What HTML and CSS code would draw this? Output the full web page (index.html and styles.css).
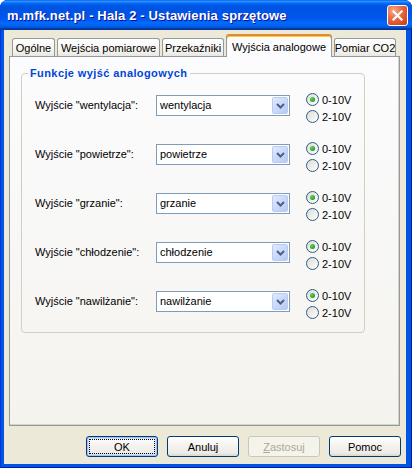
FILE: index.html
```html
<!DOCTYPE html>
<html lang="pl">
<head>
<meta charset="utf-8">
<title>Ustawienia sprzętowe</title>
<link rel="stylesheet" href="styles.css">
</head>
<body>
<div class="window">
  <div class="titlebar">
    <span class="title">m.mfk.net.pl - Hala 2 - Ustawienia sprzętowe</span>
    <div class="close"><svg width="13" height="13" viewBox="0 0 13 13"><path d="M2.5 2.5L10.5 10.5M10.5 2.5L2.5 10.5" stroke="#fff" stroke-width="2.2" stroke-linecap="square" fill="none"/></svg></div>
  </div>
  <div class="client">
    <div class="tabs">
      <div class="tab w43">Ogólne</div>
      <div class="tab w103">Wejścia pomiarowe</div>
      <div class="tab w62">Przekaźniki</div>
      <div class="tab active w106">Wyjścia analogowe</div>
      <div class="tab w62">Pomiar CO2</div>
    </div>
    <div class="panel">
      <fieldset class="group">
        <legend>Funkcje wyjść analogowych</legend>
        <div class="row">
          <span class="label">Wyjście "wentylacja":</span>
          <div class="combo"><span class="value">wentylacja</span><span class="drop"><svg width="9" height="6" viewBox="0 0 9 6"><path d="M1 1L4.5 4.5L8 1" stroke="#4D6185" stroke-width="2" fill="none"/></svg></span></div>
          <div class="radios">
            <div class="radio"><span class="dot checked"></span>0-10V</div>
            <div class="radio"><span class="dot"></span>2-10V</div>
          </div>
        </div>
        <div class="row">
          <span class="label">Wyjście "powietrze":</span>
          <div class="combo"><span class="value">powietrze</span><span class="drop"><svg width="9" height="6" viewBox="0 0 9 6"><path d="M1 1L4.5 4.5L8 1" stroke="#4D6185" stroke-width="2" fill="none"/></svg></span></div>
          <div class="radios">
            <div class="radio"><span class="dot checked"></span>0-10V</div>
            <div class="radio"><span class="dot"></span>2-10V</div>
          </div>
        </div>
        <div class="row">
          <span class="label">Wyjście "grzanie":</span>
          <div class="combo"><span class="value">grzanie</span><span class="drop"><svg width="9" height="6" viewBox="0 0 9 6"><path d="M1 1L4.5 4.5L8 1" stroke="#4D6185" stroke-width="2" fill="none"/></svg></span></div>
          <div class="radios">
            <div class="radio"><span class="dot checked"></span>0-10V</div>
            <div class="radio"><span class="dot"></span>2-10V</div>
          </div>
        </div>
        <div class="row">
          <span class="label">Wyjście "chłodzenie":</span>
          <div class="combo"><span class="value">chłodzenie</span><span class="drop"><svg width="9" height="6" viewBox="0 0 9 6"><path d="M1 1L4.5 4.5L8 1" stroke="#4D6185" stroke-width="2" fill="none"/></svg></span></div>
          <div class="radios">
            <div class="radio"><span class="dot checked"></span>0-10V</div>
            <div class="radio"><span class="dot"></span>2-10V</div>
          </div>
        </div>
        <div class="row">
          <span class="label">Wyjście "nawilżanie":</span>
          <div class="combo"><span class="value">nawilżanie</span><span class="drop"><svg width="9" height="6" viewBox="0 0 9 6"><path d="M1 1L4.5 4.5L8 1" stroke="#4D6185" stroke-width="2" fill="none"/></svg></span></div>
          <div class="radios">
            <div class="radio"><span class="dot checked"></span>0-10V</div>
            <div class="radio"><span class="dot"></span>2-10V</div>
          </div>
        </div>
      </fieldset>
    </div>
    <div class="buttons">
      <div class="btn default">OK</div>
      <div class="btn">Anuluj</div>
      <div class="btn disabled"><u>Z</u>astosuj</div>
      <div class="btn">Pomoc</div>
    </div>
  </div>
</div>
</body>
</html>
```

FILE: styles.css
```css
html, body {
  margin: 0;
  padding: 0;
  background: #ffffff;
}
body {
  font-family: "Liberation Sans", Arial, sans-serif;
  font-size: 11px;
  color: #000;
}
.window {
  width: 412px;
  height: 468px;
  display: flex;
  flex-direction: column;
  background: #0055E5;
  border-radius: 8px 8px 0 0;
  box-shadow: inset 1px 0 #0831D9, inset -1px 0 #001CA0, inset 0 -1px #001CA0;
  overflow: hidden;
}
.titlebar {
  height: 30px;
  flex: none;
  display: flex;
  align-items: center;
  justify-content: space-between;
  padding: 0 4px 0 7px;
  border-radius: 7px 7px 0 0;
  background: linear-gradient(to bottom, #0058EE 0%, #3593FF 4%, #288EFF 6%, #127DFF 8%, #036FFC 10%, #0262EE 14%, #0057E5 20%, #0054E3 24%, #0055EB 56%, #005BF5 66%, #026AFE 76%, #0062EF 86%, #0052D6 92%, #0040AB 94%, #003092 100%);
}
.title {
  color: #fff;
  font-weight: bold;
  font-size: 13px;
  letter-spacing: 0.15px;
  text-shadow: 1px 1px #0F1089;
  margin-top: 1px;
  white-space: nowrap;
}
.close {
  width: 21px;
  height: 21px;
  box-sizing: border-box;
  border: 1px solid #fff;
  border-radius: 3px;
  background: radial-gradient(circle at 30% 25%, #F7A888 0%, #E8673F 45%, #D4491F 80%, #C2401C 100%);
  display: flex;
  align-items: center;
  justify-content: center;
  margin-top: 1px;
}
.client {
  flex: 1;
  margin: 0 6px 4px 4px;
  background: #ECE9D8;
  display: flex;
  flex-direction: column;
}
.tabs {
  display: flex;
  align-items: flex-end;
  gap: 2px;
  height: 22px;
  margin: 4px 0 0 8px;
  position: relative;
  z-index: 1;
}
.tab {
  height: 18px;
  box-sizing: border-box;
  border: 1px solid #919B9C;
  border-bottom: none;
  border-radius: 3px 3px 0 0;
  background: linear-gradient(#FFFFFF, #F4F3EE 70%, #E8E7E0);
  display: flex;
  align-items: center;
  justify-content: center;
  padding-top: 1px;
  white-space: nowrap;
}
.tab.active {
  height: 23px;
  margin-bottom: -1px;
  border-top: none;
  background: #FCFCFE;
  box-shadow: inset 0 2px #E68B2C, inset 0 3px #FFC73C;
  padding-top: 2px;
}
.w43 { width: 43px; }
.w62 { width: 62px; }
.w103 { width: 103px; }
.w106 { width: 106px; }
.panel {
  width: 391px;
  height: 370px;
  box-sizing: border-box;
  margin-left: 5px;
  border: 1px solid #919B9C;
  background: linear-gradient(#FCFCFE, #F4F3EE);
  box-shadow: inset -1px -1px #D6D3C7;
  overflow: hidden;
}
.group {
  margin: 9px 0 0 11px;
  width: 344px;
  box-sizing: border-box;
  border: 1px solid #D0D0BF;
  border-radius: 4px;
  padding: 11px 0 11px 13px;
  min-width: 0;
}
.group legend {
  font-weight: bold;
  color: #0046D5;
  line-height: 14px;
  letter-spacing: 0.4px;
  padding: 0 3px 0 2px;
  margin-left: -7px;
}
.row {
  display: flex;
  height: 34px;
}
.row + .row {
  margin-top: 15px;
}
.label {
  width: 121px;
  flex: none;
  line-height: 21px;
  margin-top: 4px;
  white-space: nowrap;
}
.combo {
  width: 134px;
  height: 21px;
  flex: none;
  box-sizing: border-box;
  margin-top: 4px;
  border: 1px solid #7F9DB9;
  background: #fff;
  display: flex;
}
.combo .value {
  flex: 1;
  padding-left: 3px;
  line-height: 19px;
}
.drop {
  width: 16px;
  height: 17px;
  margin: 1px;
  box-sizing: border-box;
  border: 1px solid #B9CBF3;
  border-radius: 2px;
  background: linear-gradient(135deg, #E2EBFE 0%, #CCDAFB 45%, #B7CAF5 100%);
  display: flex;
  align-items: center;
  justify-content: center;
}
.radios {
  margin-left: 16px;
  display: flex;
  flex-direction: column;
}
.radio {
  height: 17px;
  display: flex;
  align-items: center;
  gap: 3px;
}
.dot {
  width: 13px;
  height: 13px;
  box-sizing: border-box;
  border: 1px solid #2F5A86;
  border-radius: 50%;
  background: linear-gradient(135deg, #DCDCD7 0%, #EDEDE9 50%, #FFFFFF 100%);
  display: flex;
  align-items: center;
  justify-content: center;
}
.dot.checked::after {
  content: "";
  width: 5px;
  height: 5px;
  border-radius: 50%;
  background: radial-gradient(circle at 35% 35%, #5FD35F, #21A121 70%, #1A8A1A);
}
.buttons {
  display: flex;
  justify-content: flex-end;
  gap: 9px;
  margin-top: 10px;
  padding-right: 5px;
}
.btn {
  width: 72px;
  height: 21px;
  box-sizing: border-box;
  border: 1px solid #003C74;
  border-radius: 3px;
  background: linear-gradient(#FFFFFF 0%, #F5F4F0 40%, #ECEBE6 85%, #D8D5CB 100%);
  display: flex;
  align-items: center;
  justify-content: center;
}
.btn.default {
  box-shadow: inset 0 0 0 1px #A8C1F0, inset 0 0 0 2px #D2E1FA;
  outline: 1px dotted #000;
  outline-offset: -4px;
}
.btn.disabled {
  border-color: #C9C7BA;
  background: #F5F4EA;
  color: #ACA899;
}
.btn u {
  text-decoration: underline;
}
```
